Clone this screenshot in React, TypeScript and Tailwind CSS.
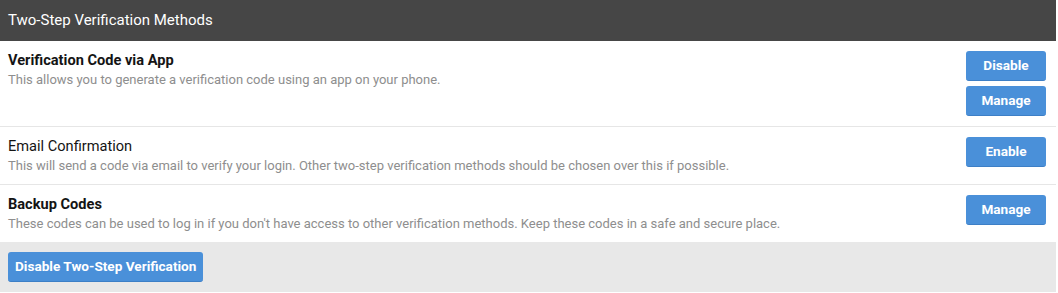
const methods = [
  {
    title: "Verification Code via App",
    description: "This allows you to generate a verification code using an app on your phone.",
    enabled: true,
    actions: ["Disable", "Manage"],
  },
  {
    title: "Email Confirmation",
    description:
      "This will send a code via email to verify your login. Other two-step verification methods should be chosen over this if possible.",
    enabled: false,
    actions: ["Enable"],
  },
  {
    title: "Backup Codes",
    description:
      "These codes can be used to log in if you don't have access to other verification methods. Keep these codes in a safe and secure place.",
    enabled: true,
    actions: ["Manage"],
  },
];

function Button({ label, wide = false }: { label: string; wide?: boolean }) {
  return (
    <button
      type="button"
      className={
        "h-[30px] rounded-[3px] border-b border-[#3d7fc6] bg-[#4a90d9] text-[13.6px] font-bold text-white " +
        (wide ? "px-[7px]" : "w-[80px]")
      }
    >
      {label}
    </button>
  );
}

export default function App() {
  return (
    <div className="w-[1056px] bg-white font-['Roboto',sans-serif]">
      <div className="flex h-[41px] items-center bg-[#464646] px-2 text-[15px] text-white">
        Two-Step Verification Methods
      </div>
      {methods.map((m, i) => (
        <div
          key={m.title}
          className={"flex items-start justify-between gap-4 p-2.5 pl-2 " + (i > 0 ? "border-t border-[#e6e6e6]" : "")}
        >
          <div>
            <div className={"text-[14.6px] leading-[18px] text-[#141414] " + (m.enabled ? "font-bold" : "")}>
              {m.title}
            </div>
            <div className="mt-[3px] text-[13px] leading-[16px] text-[#8e8e8e]">{m.description}</div>
          </div>
          <div className="flex flex-col gap-[5px]">
            {m.actions.map((a) => (
              <Button key={a} label={a} />
            ))}
          </div>
        </div>
      ))}
      <div className="flex h-[50px] items-center bg-[#e8e8e8] px-2">
        <Button label="Disable Two-Step Verification" wide />
      </div>
    </div>
  );
}
